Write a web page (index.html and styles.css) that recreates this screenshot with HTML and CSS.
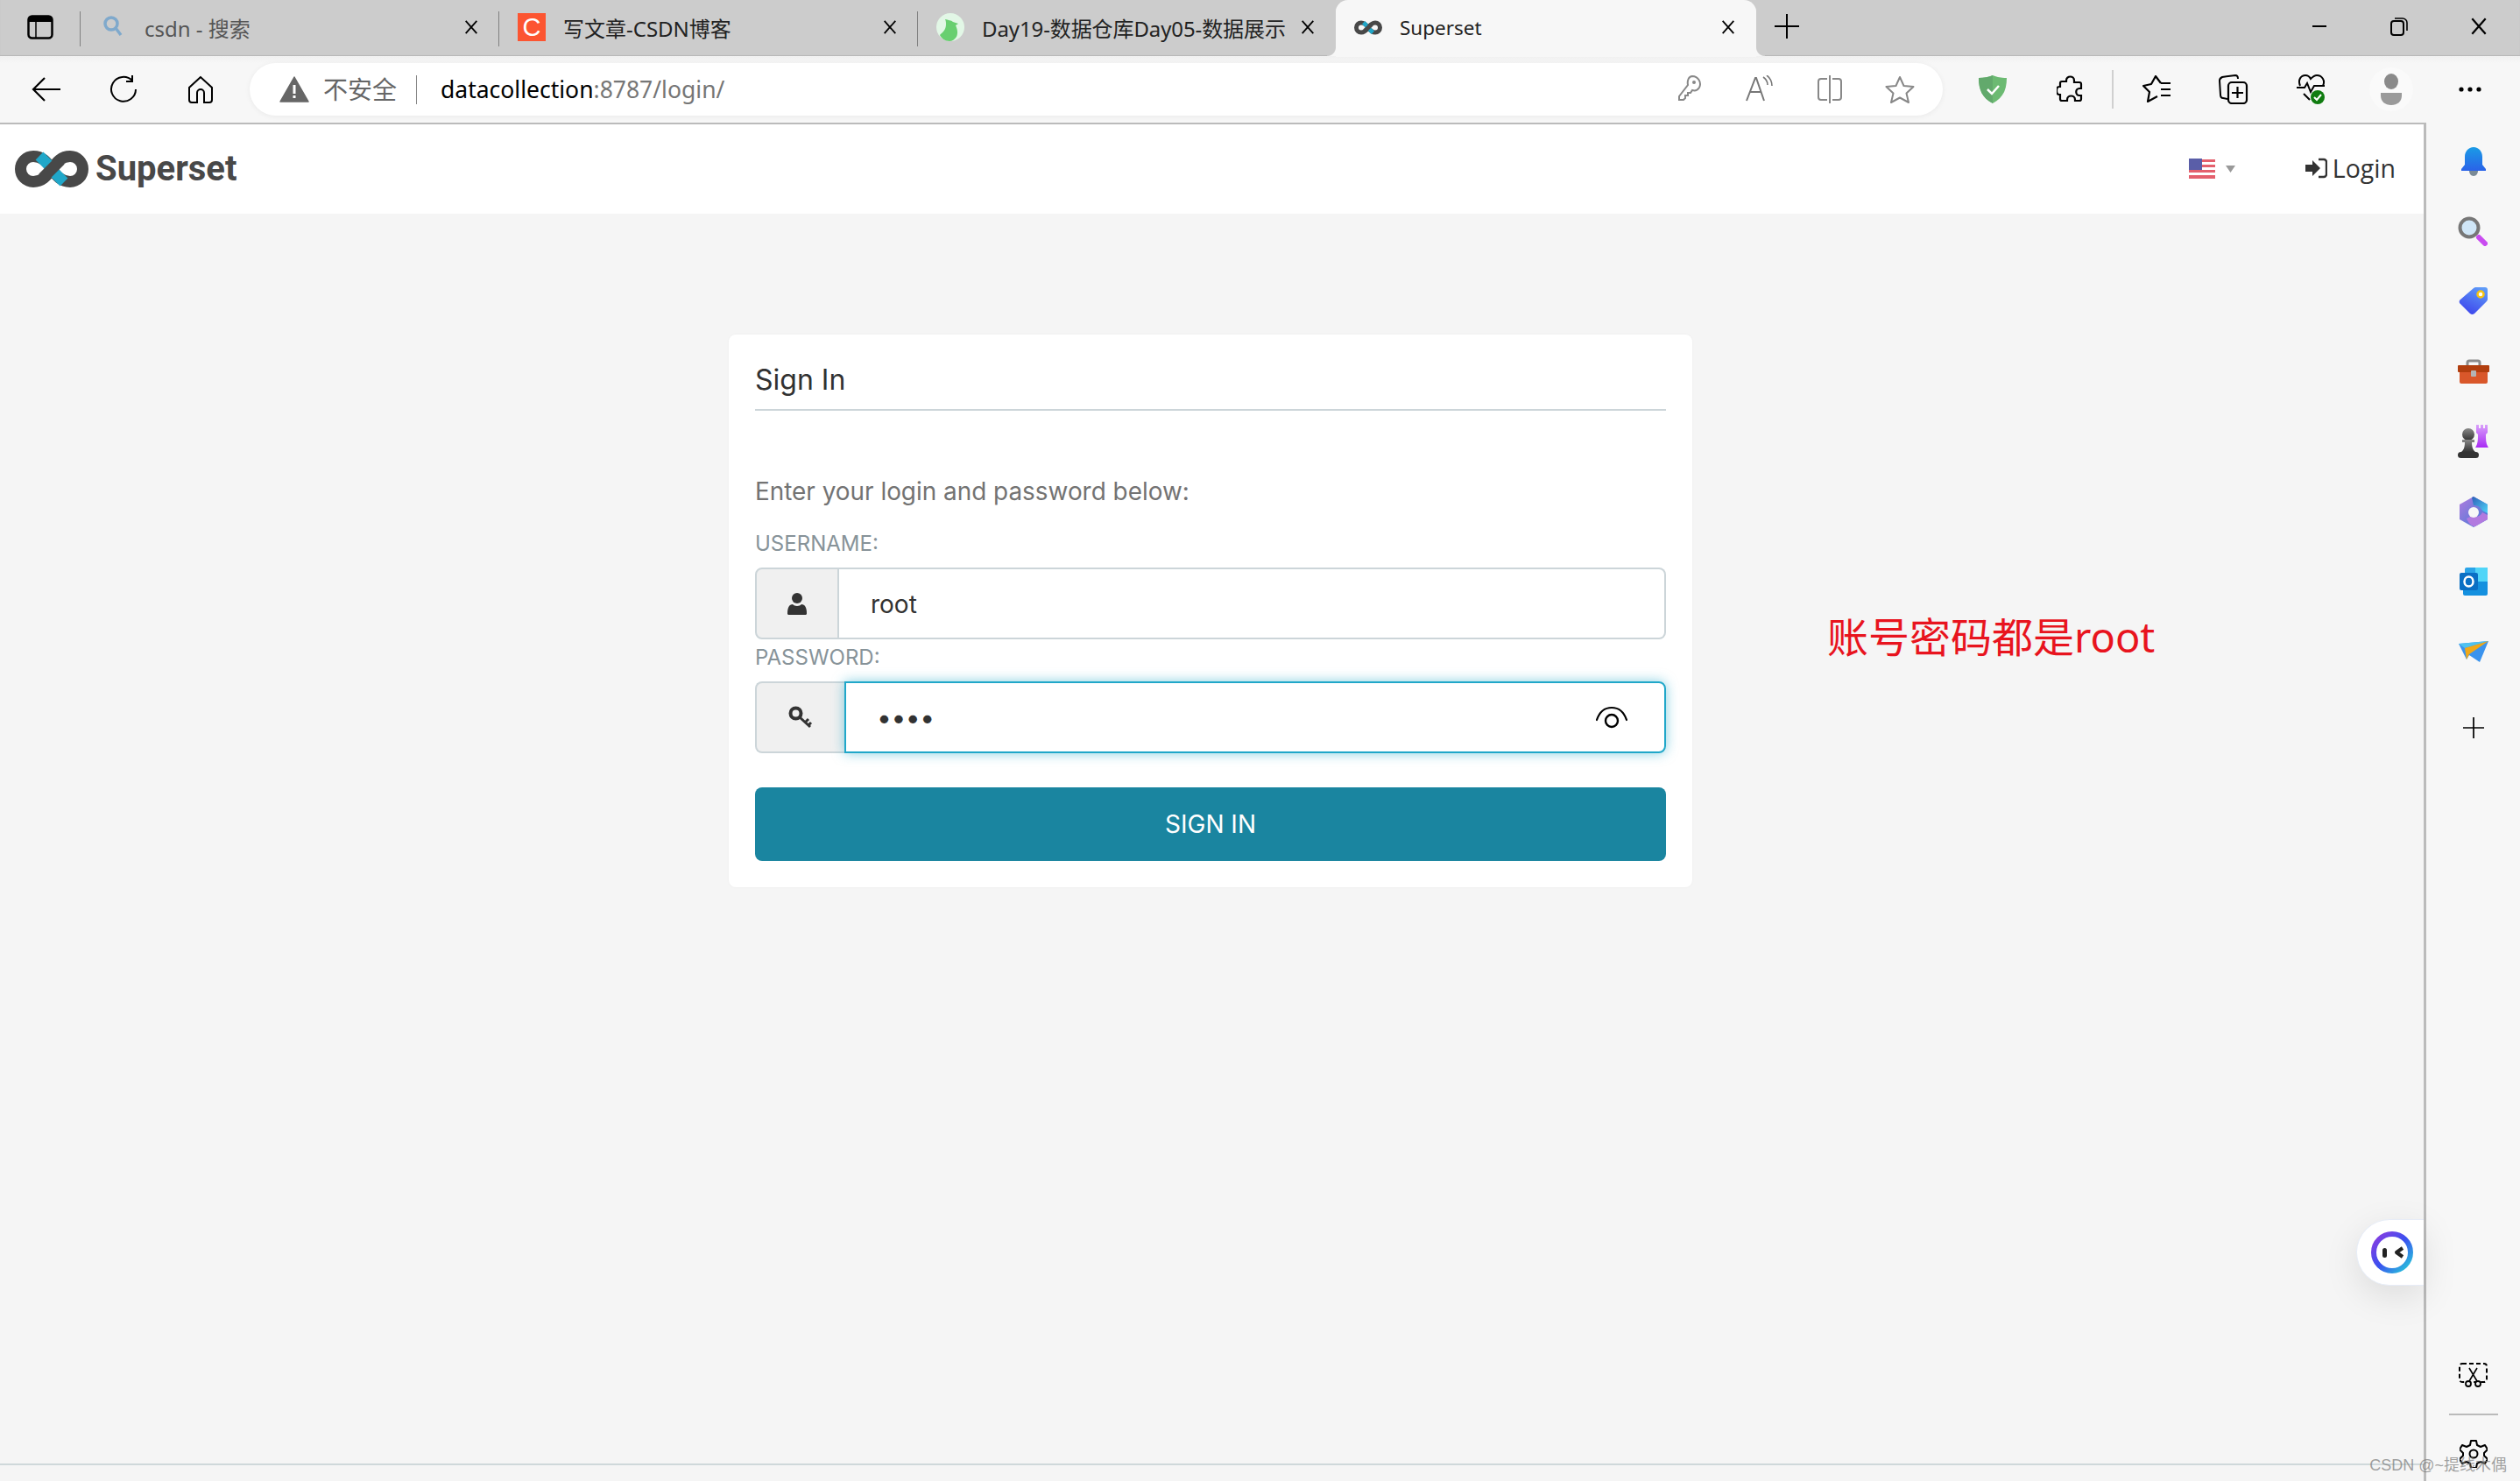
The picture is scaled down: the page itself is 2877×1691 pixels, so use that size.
FILE: index.html
```html
<!DOCTYPE html>
<html lang="en">
<head>
    <meta charset="UTF-8">
    <meta name="viewport" content="width=device-width, initial-scale=1.0">
    <title>Superset</title>
    <link rel="stylesheet" href="styles.css">
</head>
<body>
    <svg class="defs" width="0" height="0">
        <symbol id="logo" viewBox="0 0 84 42">
            <path d="M42 21C36 12 31 6.500 21 6.500a14.500 14.500 0 0 0 0 29c10 0 15-6 21-14.500s11-14.500 21-14.500a14.500 14.500 0 0 1 0 29c-10 0-15-6-21-14.500z" fill="none" stroke="#484848" stroke-width="13"/>
            <path d="M28 6L40 18M44 24L56 36" fill="none" stroke="#20a7c9" stroke-width="12.500"/>
            <path d="M32 31L52 11" fill="none" stroke="#484848" stroke-width="13"/>
        </symbol>
        <symbol id="close" viewBox="0 0 20 20">
            <path d="M3 2L17 18M17 2L3 18" fill="none" stroke="#000" stroke-width="2"/>
        </symbol>
        <symbol id="plus" viewBox="0 0 28 28">
            <path d="M14 0V28M0 14H28" fill="none" stroke="#000" stroke-width="2"/>
        </symbol>
    </svg>

    <div class="tabstrip">
        <div class="strip-start">
            <svg width="30" height="28" viewBox="0 0 30 28"><rect x="1.500" y="1.500" width="27" height="25" rx="4" fill="none" stroke="#000" stroke-width="2.500"/><path d="M2 2h26v6H2z" fill="#000"/><path d="M10 8v18" stroke="#000" stroke-width="1.500"/></svg>
        </div>
        <div class="tab">
            <span class="favicon"><svg width="24" height="28" viewBox="0 0 24 28"><circle cx="10" cy="10" r="7" fill="none" stroke="#7fa9cc" stroke-width="3.500"/><path d="M15 15l6 8" stroke="#7fa9cc" stroke-width="3.500"/></svg></span>
            <span class="tab-title muted">csdn - 搜索</span>
            <svg class="tab-close" width="18" height="18"><use href="#close"/></svg>
        </div>
        <div class="tab">
            <span class="favicon favicon-csdn">C</span>
            <span class="tab-title">写文章-CSDN博客</span>
            <svg class="tab-close" width="18" height="18"><use href="#close"/></svg>
        </div>
        <div class="tab tab-last">
            <span class="favicon">
                <svg width="32" height="32" viewBox="0 0 32 32"><circle cx="16" cy="16" r="16" fill="#e2f7e6"/><path d="M10 7c3 1 7 1 9 3l6 2-3 2c2 4 3 9 1 13-2 3-5 5-8 5-5 0-9-3-11-7 3-3 7-6 7-12 0-2 0-4-1-6z" fill="#68cf70"/></svg>
            </span>
            <span class="tab-title tab-title-long">Day19-数据仓库Day05-数据展示</span>
            <svg class="tab-close" width="18" height="18"><use href="#close"/></svg>
        </div>
        <div class="tab tab-active">
            <span class="favicon"><svg width="33" height="17"><use href="#logo"/></svg></span>
            <span class="tab-title">Superset</span>
            <svg class="tab-close" width="18" height="18"><use href="#close"/></svg>
        </div>
        <div class="new-tab"><svg width="28" height="28"><use href="#plus"/></svg></div>
        <div class="window-controls">
            <svg width="22" height="22" viewBox="0 0 22 22"><path d="M3 11H19" stroke="#000" stroke-width="2"/></svg>
            <svg width="22" height="22" viewBox="0 0 22 22"><rect x="2" y="5" width="14" height="16" rx="3" fill="none" stroke="#000" stroke-width="2"/><path d="M6 2h9a5 5 0 0 1 5 5v9" fill="none" stroke="#000" stroke-width="1.600"/></svg>
            <svg width="22" height="22"><use href="#close"/></svg>
        </div>
    </div>

    <div class="toolbar">
        <div class="tool">
            <svg width="34" height="30" viewBox="0 0 34 30"><path d="M15 2L2 15l13 13M2 15H33" fill="none" stroke="#000" stroke-width="2.200"/></svg>
        </div>
        <div class="tool">
            <svg width="34" height="32" viewBox="0 0 34 32"><path d="M27 6A14 14 0 1 0 31 16" fill="none" stroke="#000" stroke-width="2"/><path d="M27 0V7H20" fill="none" stroke="#000" stroke-width="2"/></svg>
        </div>
        <div class="tool">
            <svg width="30" height="32" viewBox="0 0 30 32"><path d="M15 2L2 14v14a3 3 0 0 0 3 3h6V20a4 4 0 0 1 8 0v11h6a3 3 0 0 0 3-3V14z" fill="none" stroke="#000" stroke-width="2"/></svg>
        </div>

        <div class="addressbar">
            <svg class="warn" width="34" height="30" viewBox="0 0 34 30"><path d="M17 1L33 29H1z" fill="#666" stroke="#666" stroke-width="1.500" stroke-linejoin="round"/><path d="M17 10v10M17 22v3" stroke="#fff" stroke-width="3"/></svg>
            <span class="insecure">不安全</span>
            <span class="url"><span class="host">datacollection</span>:8787/login/</span>
            <div class="address-tools">
                <div class="address-tool">
                    <svg width="28" height="30" viewBox="0 0 28 30"><path d="M17 1a9 9 0 0 1 8 13c-2 3-5 4-8 3l-2 3h-3v3H9v3l-2 2H2v-4l10-13c-1-5 1-10 5-10z" fill="none" stroke="#888" stroke-width="2"/><circle cx="19" cy="8" r="2" fill="#888"/></svg>
                </div>
                <div class="address-tool">
                    <svg width="32" height="30" viewBox="0 0 32 30"><path d="M1 29L11 3h1l9 26M5 19h13" fill="none" stroke="#777" stroke-width="2"/><path d="M20 2c3 2 5 5 5 9M24 0c4 3 6 7 6 12" fill="none" stroke="#777" stroke-width="1.600"/></svg>
                </div>
                <div class="address-tool">
                    <svg width="30" height="32" viewBox="0 0 30 32"><path d="M12 4H5a3 3 0 0 0-3 3v18a3 3 0 0 0 3 3h7M18 4h7a3 3 0 0 1 3 3v18a3 3 0 0 1-3 3h-7" fill="none" stroke="#888" stroke-width="2"/><path d="M15 0V32" stroke="#888" stroke-width="2"/></svg>
                </div>
                <div class="address-tool">
                    <svg width="34" height="32" viewBox="0 0 34 32"><path d="M17 2l4.500 10 11 1-8 7.500 2.500 10.500-10-5.500-10 5.500 2.500-10.500-8-7.500 11-1z" fill="none" stroke="#888" stroke-width="2" stroke-linejoin="round"/></svg>
                </div>
            </div>
        </div>

        <div class="toolbar-right">
            <div class="tool-sm">
                <svg width="32" height="32" viewBox="0 0 32 32"><path d="M16 0c4 2 10 3 16 3 0 13-4 23-16 29C4 26 0 16 0 3c6 0 12-1 16-3z" fill="#6cba72"/><path d="M16 0C12 2 6 3 0 3c0 13 4 23 16 29z" fill="#62a96c"/><path d="M10 16l5 5 8-9" fill="none" stroke="#fff" stroke-width="2.500"/></svg>
            </div>
            <div class="tool-sm">
                <svg width="30" height="32" viewBox="0 0 30 32"><path d="M11 6c0-6 9-6 9 0v2h6a2 2 0 0 1 2 2v5h-2c-5 0-5 8 0 8h2v4a2 2 0 0 1-2 2h-5v-1c0-6-9-6-9 0v1H6a2 2 0 0 1-2-2v-5h-1c-4 0-4-9 0-9h1v-4a2 2 0 0 1 2-2h5z" fill="none" stroke="#000" stroke-width="2.200"/></svg>
            </div>
            <span class="toolbar-sep"></span>
            <div class="tool-sm">
                <svg width="33" height="32" viewBox="0 0 33 32"><path d="M21 9L15 1 10 10 1 12 8 19 6 30 17 24" fill="none" stroke="#000" stroke-width="2.200" stroke-linejoin="round"/><path d="M21 9h11M21 16h11M21 23h11" fill="none" stroke="#000" stroke-width="2.200"/></svg>
            </div>
            <div class="tool-sm">
                <svg width="34" height="34" viewBox="0 0 34 34"><path d="M10 28l-5-1c-2 0-3-2-3-4L1 7c0-2 1-3 3-4l15-2c2 0 3 2 3 4" fill="none" stroke="#000" stroke-width="2"/><rect x="11" y="9" width="21" height="24" rx="4" fill="none" stroke="#000" stroke-width="2.200"/><path d="M21.500 14v13M15 21h13" stroke="#000" stroke-width="2.200"/></svg>
            </div>
            <div class="tool-sm">
                <svg width="34" height="34" viewBox="0 0 34 34"><path d="M5 13C2 6 6 1 11 1c3 0 5 2 6 4 2-2 4-4 7-4 6 0 10 6 7 12M9 22l7 7" fill="none" stroke="#000" stroke-width="2"/><path d="M1 15h9l3-5 4 10 4-7h12" fill="none" stroke="#000" stroke-width="2"/><circle cx="25" cy="26" r="8" fill="#107c10"/><path d="M21 26l3 3 5-6" fill="none" stroke="#fff" stroke-width="2"/></svg>
            </div>
            <div class="avatar">
                <svg width="26" height="36" viewBox="0 0 26 36"><ellipse cx="13" cy="9" rx="8" ry="9" fill="#8a8a8a"/><path d="M1 22h24v3c0 7-5 11-12 11S1 32 1 25z" fill="#9a9a9a"/></svg>
            </div>
            <div class="tool-sm">
                <svg width="28" height="8" viewBox="0 0 28 8"><circle cx="4" cy="4" r="2.600"/><circle cx="14" cy="4" r="2.600"/><circle cx="24" cy="4" r="2.600"/></svg>
            </div>
        </div>
    </div>

    <div class="content">
        <div class="page">
            <nav class="navbar">
                <div class="brand">
                    <svg width="84" height="42"><use href="#logo"/></svg>
                    <span class="brand-name">Superset</span>
                </div>
                <div class="nav-right">
                    <svg class="flag" width="30" height="24" viewBox="0 0 30 24">
                        <rect width="30" height="24" fill="#fff"/>
                        <path d="M0 1h30v3H0zM0 7h30v3H0zM0 13h30v3H0zM0 19h30v4H0z" fill="#e4606d"/>
                        <rect width="15" height="13" fill="#5a5ea8"/>
                    </svg>
                    <svg class="caret" width="11" height="8" viewBox="0 0 11 8"><path d="M0 0h11L5.500 8z" fill="#999"/></svg>
                    <a class="login">
                        <svg width="25" height="24" viewBox="0 0 25 24"><path d="M0 8h8V3l9 9-9 9v-5H0z" fill="#333"/><path d="M15 2h6a3 3 0 0 1 3 3v14a3 3 0 0 1-3 3h-6" fill="none" stroke="#333" stroke-width="2.400"/></svg>
                        <span>Login</span>
                    </a>
                </div>
            </nav>

            <main class="main">
                <div class="card">
                    <h4 class="card-title">Sign In</h4>
                    <p class="card-desc">Enter your login and password below:</p>

                    <label class="field-label">USERNAME:</label>
                    <div class="input-group">
                        <span class="addon">
                            <svg width="22" height="25" viewBox="0 0 22 25"><circle cx="11" cy="6" r="6" fill="#333"/><path d="M1 25a2 2 0 0 1-1-2c0-6 2-10 6-10 1 1 3 2 5 2s4-1 5-2c4 0 6 4 6 10a2 2 0 0 1-1 2z" fill="#333"/></svg>
                        </span>
                        <div class="input">root</div>
                    </div>

                    <label class="field-label label-password">PASSWORD:</label>
                    <div class="input-group">
                        <span class="addon addon-focus">
                            <svg width="28" height="26" viewBox="0 0 28 26"><circle cx="8.500" cy="8.500" r="6" fill="none" stroke="#333" stroke-width="4"/><path d="M13 13l12 11M19 19l4-4M23 22l3-3" fill="none" stroke="#333" stroke-width="3"/></svg>
                        </span>
                        <div class="input input-focus">
                            <span class="dots">••••</span>
                            <svg class="eye" width="36" height="26" viewBox="0 0 36 26"><path d="M1 16C4 7 10 2 18 2s14 5 17 14" fill="none" stroke="#000" stroke-width="2.200" stroke-linecap="round"/><circle cx="18" cy="17" r="7" fill="none" stroke="#000" stroke-width="2.400"/></svg>
                        </div>
                    </div>

                    <button class="btn-signin">SIGN IN</button>
                </div>

                <div class="note">账号密码都是root</div>

                <div class="chat-bubble">
                    <svg width="48" height="48" viewBox="0 0 48 48">
                        <defs>
                            <linearGradient id="ringGrad" x1="0" y1="0" x2="1" y2="1">
                                <stop offset="0" stop-color="#8f3be0"/>
                                <stop offset="0.500" stop-color="#3a50f0"/>
                                <stop offset="1" stop-color="#25d0d8"/>
                            </linearGradient>
                        </defs>
                        <circle cx="24" cy="24" r="21" fill="#fff" stroke="url(#ringGrad)" stroke-width="6"/>
                        <rect x="13" y="19" width="5" height="11" rx="2.500" fill="#222"/>
                        <path d="M36 19l-7 5 7 5" fill="none" stroke="#222" stroke-width="4" stroke-linejoin="round"/>
                    </svg>
                </div>
            </main>

            <footer class="footer"></footer>
        </div>

        <aside class="sidebar">
            <div class="side-item">
                <svg width="30" height="33" viewBox="0 0 30 33"><defs><linearGradient id="bellGrad" x1="0" y1="0" x2="0" y2="1"><stop offset="0" stop-color="#1a9be6"/><stop offset="1" stop-color="#2a62e8"/></linearGradient></defs><path d="M15 0c6 0 10 5 10 11v9l4 5v2H1v-2l4-5v-9C5 5 9 0 15 0z" fill="url(#bellGrad)"/><path d="M10 27h10c0 3-2 6-5 6s-5-3-5-6z" fill="#7a8a96"/></svg>
            </div>
            <div class="side-item">
                <svg class="side-search" width="34" height="34" viewBox="0 0 34 34"><circle cx="13" cy="13" r="10.500" fill="#cfe6f7" stroke="#777" stroke-width="4"/><path d="M24 24l7 7" stroke="#c94cf0" stroke-width="6" stroke-linecap="round"/></svg>
            </div>
            <div class="side-item">
                <svg width="34" height="34" viewBox="0 0 34 34"><defs><linearGradient id="tagGrad" x1="0.800" y1="0" x2="0.300" y2="1"><stop offset="0" stop-color="#5f9cf8"/><stop offset="1" stop-color="#3d45ec"/></linearGradient></defs><path d="M20 1h10a3 3 0 0 1 3 3v11a4 4 0 0 1-1 2L18 31a4 4 0 0 1-5 0L2 20a3 3 0 0 1 0-5L17 2a4 4 0 0 1 3-1z" fill="url(#tagGrad)"/><circle cx="25" cy="9" r="3.500" fill="#fff" stroke="#f6c312" stroke-width="2.500"/></svg>
            </div>
            <div class="side-item">
                <svg width="36" height="28" viewBox="0 0 36 28"><path d="M11 7V4a2 2 0 0 1 2-2h10a2 2 0 0 1 2 2v3" fill="none" stroke="#8b8b8b" stroke-width="3"/><rect x="2" y="7" width="32" height="21" rx="2" fill="#d9572a"/><rect y="7" width="36" height="8" rx="1" fill="#b13e0e"/><rect x="15" y="13" width="6" height="7" rx="1" fill="#b4b4b4"/></svg>
            </div>
            <div class="side-item">
                <svg width="36" height="38" viewBox="0 0 36 38"><defs><linearGradient id="pawnGrad" x1="0" y1="0" x2="0" y2="1"><stop offset="0" stop-color="#8a8a8a"/><stop offset="1" stop-color="#333"/></linearGradient><linearGradient id="rookGrad" x1="0" y1="0" x2="0" y2="1"><stop offset="0" stop-color="#d9a0fa"/><stop offset="1" stop-color="#a92cf5"/></linearGradient></defs><path d="M21 0h3v4h2V0h3v4h2V0h3v9l-2 2c0 6 0 11 3 15v0H20v0c3-4 3-9 3-15l-2-2z" fill="url(#rookGrad)"/><circle cx="12" cy="11" r="7" fill="url(#pawnGrad)"/><path d="M5 17h14v3h-3c0 5 1 9 4 11H4c3-2 4-6 4-11H5z" fill="url(#pawnGrad)"/><rect y="31" width="24" height="7" rx="3.500" fill="#333"/></svg>
            </div>
            <div class="side-item">
                <svg width="32" height="35" viewBox="0 0 32 35"><defs><linearGradient id="m365A" x1="0" y1="0" x2="1" y2="1"><stop offset="0" stop-color="#b27adf"/><stop offset="1" stop-color="#3a7bd5"/></linearGradient><linearGradient id="m365B" x1="0" y1="0" x2="1" y2="1"><stop offset="0" stop-color="#2c5fb8"/><stop offset="1" stop-color="#50d5f8"/></linearGradient></defs><path d="M16 0L32 9v17L16 35 0 26V9z" fill="url(#m365A)"/><path d="M14 1l2-1 16 9v10l-6-3c-2-4-5-6-10-6z" fill="url(#m365B)"/><path d="M8 25l6-3c4 2 10 1 12-4l6 3v5L18 34c-4 1-8-4-10-9z" fill="#b27adf"/><circle cx="16" cy="18" r="6" fill="#f7f7f7"/></svg>
            </div>
            <div class="side-item">
                <svg width="32" height="32" viewBox="0 0 32 32"><path d="M6 2a2 2 0 0 1 2-2h22a2 2 0 0 1 2 2v14H6z" fill="#2aa4e8"/><rect x="18" y="0" width="14" height="16" fill="#50d5f8"/><path d="M4 16h28v14a2 2 0 0 1-2 2H6a2 2 0 0 1-2-2z" fill="#1490df"/><rect y="6" width="21" height="20" rx="2" fill="#0a6fc4"/><ellipse cx="10.500" cy="16" rx="5" ry="5.500" fill="none" stroke="#fff" stroke-width="2.500"/></svg>
            </div>
            <div class="side-item">
                <svg width="34" height="24" viewBox="0 0 34 24"><path d="M0 3L34 0 24 24 12 16 9 21z" fill="#3a93ee"/><path d="M0 3l7 5L34 0z" fill="#4ec2ee"/><path d="M7 8l2 13 3-6L34 0z" fill="#f0a818"/></svg>
            </div>
            <div class="side-item side-add">
                <svg width="24" height="24" viewBox="0 0 28 28"><use href="#plus"/></svg>
            </div>

            <div class="side-bottom">
                <svg width="33" height="28" viewBox="0 0 33 28"><rect x="1" y="1" width="31" height="21" rx="3" fill="none" stroke="#000" stroke-width="2" stroke-dasharray="5 3"/><path d="M12 6l9 15M21 6l-9 15" stroke="#000" stroke-width="1.600" fill="#f7f7f7"/><circle cx="11" cy="24" r="3" fill="#f7f7f7" stroke="#000" stroke-width="1.800"/><circle cx="22" cy="24" r="3" fill="#f7f7f7" stroke="#000" stroke-width="1.800"/></svg>
                <span class="side-divider"></span>
                <svg width="32" height="32" viewBox="0 0 32 32"><path d="M13 1h6l1 5 4 2 5-2 3 5-4 4v3l4 4-3 5-5-2-4 2-1 5h-6l-1-5-4-2-5 2-3-5 4-4v-3L0 11l3-5 5 2 4-2z" fill="none" stroke="#000" stroke-width="2" stroke-linejoin="round"/><circle cx="16" cy="16" r="4.500" fill="none" stroke="#000" stroke-width="2"/></svg>
            </div>
        </aside>
    </div>

    <div class="watermark">CSDN @~提线木偶</div>
</body>
</html>
```

FILE: styles.css
```css
* {
    box-sizing: border-box;
}

html, body {
    margin: 0;
    height: 100%;
}

body {
    position: relative;
    width: 2877px;
    height: 1691px;
    display: flex;
    flex-direction: column;
    overflow: hidden;
    background-color: #f7f7f7;
    font-family: "Noto Sans", "Noto Sans CJK SC", sans-serif;
}

.defs {
    position: absolute;
}

/* tab strip */
.tabstrip {
    height: 64px;
    flex: none;
    display: flex;
    align-items: stretch;
    background-color: #cccccc;
    box-shadow: inset 0 -1px 1px rgba(0, 0, 0, 0.1);
}

.strip-start {
    width: 92px;
    flex: none;
    display: flex;
    align-items: center;
    padding-left: 31px;
    padding-bottom: 2px;
    position: relative;
}

.strip-start::after,
.tab::after {
    content: "";
    position: absolute;
    right: 0;
    top: 13px;
    height: 40px;
    width: 1px;
    background-color: #808080;
}

.tab {
    position: relative;
    width: 478px;
    flex: none;
    display: flex;
    align-items: center;
    padding: 0 23px 2px 21px;
    font-size: 24px;
    color: #222;
}

.tab-last {
    width: 477px;
}

.tab-last::after {
    display: none;
}

.tab-active {
    width: 480px;
    font-size: 22.5px;
    background-color: #f7f7f7;
    border-radius: 14px 14px 0 0;
    box-shadow: 0 1px 0 #f7f7f7;
}

.tab-active::before,
.tab-active::after {
    content: "";
    position: absolute;
    top: auto;
    bottom: 0;
    width: 10px;
    height: 10px;
    background-color: transparent;
}

.tab-active::before {
    left: -10px;
    background-image: radial-gradient(circle at 0 0, #cccccc 9.500px, #f7f7f7 10.500px);
}

.tab-active::after {
    right: -10px;
    background-image: radial-gradient(circle at 100% 0, #cccccc 9.500px, #f7f7f7 10.500px);
}

.favicon {
    width: 32px;
    height: 32px;
    flex: none;
    margin-right: 20px;
    display: flex;
    align-items: center;
    justify-content: center;
}

.favicon-csdn {
    background-color: #fc5531;
    color: #fff;
    font-size: 29px;
    font-family: "Liberation Sans", sans-serif;
}

.tab-title {
    flex: 1;
    white-space: nowrap;
}

.tab-title-long {
    letter-spacing: -0.1px;
}

.muted {
    color: #555;
}

.tab-close {
    flex: none;
}

.new-tab {
    width: 70px;
    display: flex;
    align-items: center;
    justify-content: center;
    padding-bottom: 4px;
}

.window-controls {
    margin-left: auto;
    padding: 0 36px 4px 0;
    display: flex;
    align-items: center;
    gap: 69px;
}

/* address bar row */
.toolbar {
    height: 76px;
    flex: none;
    display: flex;
    align-items: center;
    padding-left: 9px;
    background-color: #f7f7f7;
    background-image: linear-gradient(#f0f0f0, #f7f7f7 8px);
}

.tool {
    width: 88px;
    flex: none;
    display: flex;
    justify-content: center;
}

.addressbar {
    width: 1933px;
    height: 60px;
    margin-left: 12px;
    flex: none;
    display: flex;
    align-items: center;
    padding-left: 34px;
    background-color: #fff;
    border-radius: 30px;
    box-shadow: 0 1px 6px rgba(0, 0, 0, 0.06);
}

.warn {
    flex: none;
}

.insecure {
    margin-left: 16px;
    padding-right: 22px;
    border-right: 1px solid #888;
    font-size: 28px;
    line-height: 33px;
    color: #666;
}

.url {
    margin-left: 27px;
    font-size: 26.500px;
    color: #767676;
    white-space: nowrap;
}

.host {
    color: #000;
}

.address-tools {
    margin-left: auto;
    padding-right: 9px;
    display: flex;
}

.address-tool {
    width: 80px;
    display: flex;
    justify-content: center;
}

.toolbar-right {
    flex: 1;
    display: flex;
    align-items: center;
    padding-left: 13px;
}

.tool-sm {
    width: 88px;
    flex: none;
    display: flex;
    justify-content: center;
}

.toolbar-sep {
    width: 2px;
    height: 44px;
    margin: 0 5px 0 4px;
    background-color: #d0d0d0;
}

.avatar {
    width: 50px;
    height: 50px;
    margin: 0 21px 0 23px;
    flex: none;
    border-radius: 50%;
    background-color: #fafafa;
    display: flex;
    align-items: center;
    justify-content: center;
}

/* page area */
.content {
    flex: 1;
    min-height: 0;
    display: flex;
}

.page {
    flex: 1;
    display: flex;
    flex-direction: column;
    border-top: 2px solid #bbbbbb;
}

.navbar {
    height: 102px;
    flex: none;
    display: flex;
    align-items: center;
    justify-content: space-between;
    padding: 0 32px 0 17px;
    background-color: #fff;
}

.brand {
    display: flex;
    align-items: center;
    gap: 8px;
}

.brand-name {
    font-family: Roboto, sans-serif;
    font-weight: 700;
    font-size: 40px;
    color: #484848;
    line-height: 42px;
}

.nav-right {
    display: flex;
    align-items: center;
}

.flag {
    filter: blur(0.5px);
}

.caret {
    margin-left: 12px;
}

.login {
    margin-left: 80px;
    padding-bottom: 2px;
    display: flex;
    align-items: center;
    gap: 6px;
    font-family: "Open Sans", sans-serif;
    font-size: 28.500px;
    color: #333;
}

.main {
    position: relative;
    flex: 1;
    padding: 138px 0 0 832px;
    background-color: #f5f5f5;
}

.card {
    width: 1100px;
    padding: 33px 30px 30px;
    background-color: #fff;
    border-radius: 8px;
    box-shadow: 0 0 3px rgba(0, 0, 0, 0.04);
    font-family: Inter, sans-serif;
}

.card-title {
    margin: 0;
    padding: 0 0 14px;
    line-height: 38px;
    font-size: 32px;
    font-weight: 400;
    color: #323232;
    border-bottom: 2px solid #ccd5d9;
}

.card-desc {
    margin: 72px 0 25px;
    line-height: 40px;
    font-size: 27.900px;
    color: #737373;
}

.field-label {
    display: block;
    margin: 0 0 12px;
    line-height: 30px;
    font-size: 24px;
    color: #879399;
}

.label-password {
    margin-top: 6px;
    margin-bottom: 12px;
}

.input-group {
    display: flex;
    height: 82px;
}

.addon {
    width: 96px;
    flex: none;
    display: flex;
    align-items: center;
    justify-content: center;
    background-color: #f0f0f0;
    border: 2px solid #ccd5d9;
    border-radius: 8px 0 0 8px;
}

.addon-focus {
    width: 102px;
    border-right: none;
}

.input {
    flex: 1;
    display: flex;
    align-items: center;
    padding: 1px 0 0 36px;
    border: 2px solid #ccd5d9;
    border-left: none;
    border-radius: 0 8px 8px 0;
    font-size: 28px;
    color: #323232;
}

.input-focus {
    position: relative;
    justify-content: space-between;
    padding: 0 42px 0 35px;
    border: 2px solid #20a7c9;
    border-radius: 0 8px 8px 0;
    box-shadow: 0 0 14px rgba(32, 167, 201, 0.55);
}

.dots {
    font-size: 30px;
    letter-spacing: -0.500px;
    color: #323232;
}

.btn-signin {
    display: block;
    width: 100%;
    height: 84px;
    margin-top: 39px;
    border: none;
    border-radius: 8px;
    background-color: #1a85a0;
    color: #fff;
    font-family: Inter, sans-serif;
    font-size: 28px;
}

.note {
    position: absolute;
    left: 2086px;
    top: 451px;
    font-size: 47px;
    line-height: 64px;
    color: #e8141e;
    white-space: nowrap;
}

.chat-bubble {
    position: absolute;
    right: 0;
    top: 1148px;
    width: 77px;
    height: 76px;
    padding-left: 16px;
    display: flex;
    align-items: center;
    background-color: #fff;
    border: 1px solid #e6ecf7;
    border-right: none;
    border-radius: 38px 0 0 38px;
    box-shadow: 0 12px 40px rgba(0, 0, 0, 0.1);
}

.footer {
    height: 20px;
    flex: none;
    background-color: #f5f5f5;
    border-top: 2px solid #cfd8da;
}

/* edge sidebar */
.sidebar {
    width: 110px;
    flex: none;
    display: flex;
    flex-direction: column;
    align-items: center;
    padding: 4px 0 15px;
    border-left: 3px solid #bbbbbb;
    background-color: #f7f7f7;
}

.side-item {
    height: 80px;
    flex: none;
    display: flex;
    align-items: center;
    justify-content: center;
}

.side-search {
    margin-right: 2px;
}

.side-add {
    margin-top: 7px;
}

.side-bottom {
    margin-top: auto;
    display: flex;
    flex-direction: column;
    align-items: center;
}

.side-divider {
    width: 56px;
    height: 2px;
    margin: 30px 0 28px;
    background-color: #bbbbbb;
}

.watermark {
    position: absolute;
    right: 15px;
    bottom: 6px;
    font-family: "Liberation Sans", "Noto Sans CJK SC", sans-serif;
    font-size: 18px;
    line-height: 24px;
    color: rgba(120, 120, 120, 0.7);
}
```
